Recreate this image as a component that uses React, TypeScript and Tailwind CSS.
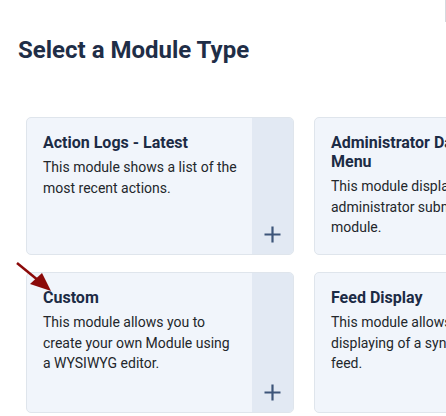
interface ModuleType {
  title: string
  description: string
}

const modules: ModuleType[] = [
  { title: "Action Logs - Latest", description: "This module shows a list of the most recent actions." },
  {
    title: "Administrator Dashboard Menu",
    description: "This module displays the administrator submenu as a module.",
  },
  { title: "Custom", description: "This module allows you to create your own Module using a WYSIWYG editor." },
  { title: "Feed Display", description: "This module allows the displaying of a syndicated feed." },
]

function PlusIcon() {
  return (
    <svg width="17" height="17" viewBox="0 0 17 17" className="text-[#3d5579]">
      <path d="M8.5 0.5v16M0.5 8.5h16" stroke="currentColor" strokeWidth="2.2" fill="none" />
    </svg>
  )
}

function ModuleCard({ item }: { item: ModuleType }) {
  return (
    <div className="flex h-full overflow-hidden rounded-[5px] border border-[#dfe5ec] bg-[#f1f5fb]">
      <div className="flex-1 pl-4 pr-[13px] pt-[15px]">
        <h3 className="text-[16px] font-bold leading-[19px] text-[#1c2b45]">{item.title}</h3>
        <p className="mt-[5px] text-[14px] leading-[20.5px] text-[#23272b]">{item.description}</p>
      </div>
      <div className="flex w-[41px] shrink-0 items-end justify-center bg-[#e2e9f3] pb-[11px]">
        <PlusIcon />
      </div>
    </div>
  )
}

export default function App() {
  return (
    <div
      className="relative h-[416px] w-[446px] overflow-hidden bg-white"
      style={{ fontFamily: "Roboto, 'Liberation Sans', sans-serif" }}
    >
      <div className="absolute right-0 top-0 h-[22px] w-px bg-[#d5d9de]" />

      <h1 className="ml-[18px] pt-[36px] text-[24px] font-bold leading-[29px] text-[#1f2e47]">
        Select a Module Type
      </h1>

      <div className="ml-[26px] mt-[52px] grid w-[556px] grid-cols-[268px_268px] grid-rows-[138px_141px] gap-x-[20px] gap-y-[17px]">
        {modules.map((m) => (
          <ModuleCard key={m.title} item={m} />
        ))}
      </div>

      {/* seta de destaque */}
      <svg className="absolute left-[10px] top-[255px]" width="44" height="40" viewBox="0 0 44 40">
        <line x1="7" y1="8" x2="29" y2="26" stroke="#8b0a0a" strokeWidth="2.5" />
        <polygon points="41,36 20,29 32,18" fill="#8b0a0a" />
      </svg>
    </div>
  )
}
